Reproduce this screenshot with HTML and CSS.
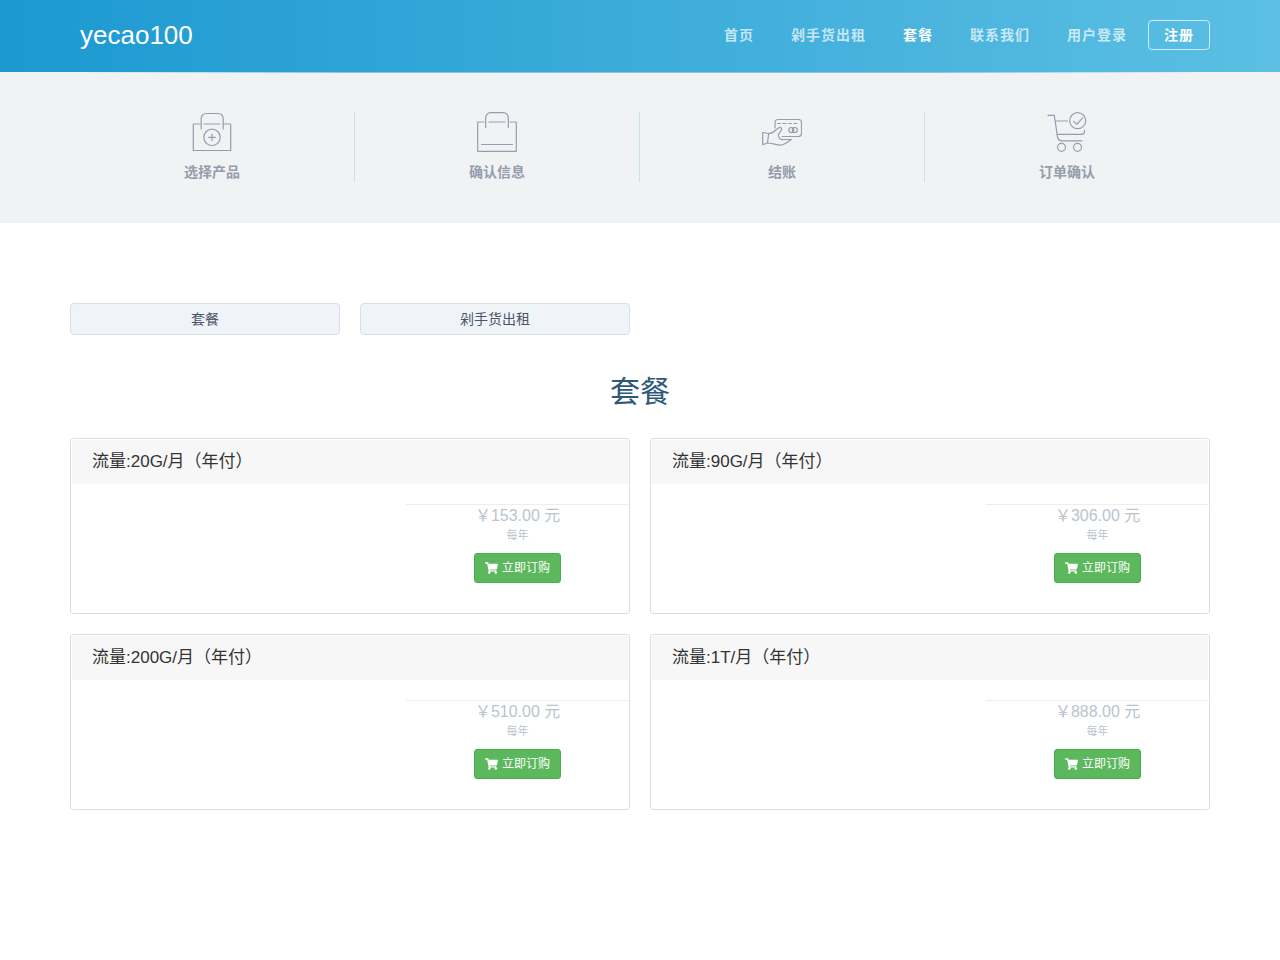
FILE: index.html
```html
<!DOCTYPE html>
<html lang="zh-CN">
<head>
<meta charset="utf-8">
<meta name="viewport" content="width=device-width, initial-scale=1">
<title>套餐 - yecao100</title>
<link rel="stylesheet" href="styles.css">
</head>
<body>
<svg class="sprite" aria-hidden="true">
  <symbol id="cart" viewBox="0 0 576 512"><path fill="currentColor" d="M528 301l47-208c4-15-8-29-23-29H159l-9-45C148 8 138 0 126 0H24C11 0 0 11 0 24v16c0 13 11 24 24 24h70l70 343a56 56 0 1 0 67 9h210a56 56 0 1 0 64-10l5-25c4-15-8-29-23-29H218l-7-32h294c11 0 21-8 23-19z"/></symbol>
</svg>

<header class="header">
  <div class="container header-inner">
    <a class="logo" href="#">yecao100</a>
    <nav class="nav">
      <a href="#">首页</a>
      <a href="#">剁手货出租</a>
      <a class="active" href="#" aria-current="page">套餐</a>
      <a href="#">联系我们</a>
      <a href="#">用户登录</a>
    </nav>
    <a class="register" href="#">注册</a>
  </div>
</header>

<section class="steps">
  <ol class="container step-list">
    <li class="step">
      <svg viewBox="0 0 40 40" aria-hidden="true"><path d="M8 12H1.300v26.500h37.400V12H32M12 12h16M9.200 17V6.500a5 5 0 0 1 5-5h12a5 5 0 0 1 5 5V17"/><circle cx="20" cy="25.300" r="8.200"/><path d="M20 22v6.600M16.700 25.300h6.600"/></svg>
      <span>选择产品</span>
    </li>
    <li class="step">
      <svg viewBox="0 0 40 40" aria-hidden="true"><path d="M7 10H.700v29.300h38.600V10H33M12 10h16M8.700 15.500V5.700a5 5 0 0 1 5-5h12.600a5 5 0 0 1 5 5v9.800M4.500 32.500h31"/></svg>
      <span>确认信息</span>
    </li>
    <li class="step">
      <svg viewBox="0 0 40 40" aria-hidden="true"><path d="M13 16v-5.500a3 3 0 0 1 3-3h20.500a3 3 0 0 1 3 3v11a3 3 0 0 1-3 3H20"/><path d="M15.500 11.500h21" stroke-dasharray="3 2.500"/><circle cx="29.300" cy="18" r="2.500"/><circle cx="32.800" cy="18" r="2.500"/><path d="M.700 20.500l6 1-1.200 9.500-4.800 1.700zM6.700 21.500c3 0 5-1.200 7-3.500l3.200-2.200c2-1 3.600.700 2.300 2.700l-3 4.300c.3 3.200 2.300 5 5.300 4.700h8c-3 1.700-6 4.800-9.500 5.500-5 .500-9-2-14.500-2"/></svg>
      <span>结账</span>
    </li>
    <li class="step">
      <svg viewBox="0 0 40 40" aria-hidden="true"><path d="M1 3.300h6.300l3.200 21.500c.4 2.500 2 4 4.500 4h20M8.300 9h12.200M9.800 22.300h24.500c2 0 3.200-1 3.200-3v-1"/><circle cx="30.700" cy="8.700" r="8"/><path d="M26.700 9.300l3 3 6-6.500"/><circle cx="14.500" cy="35.300" r="4"/><circle cx="30.500" cy="35.300" r="4"/></svg>
      <span>订单确认</span>
    </li>
  </ol>
</section>

<main class="container main">
  <nav class="groups" aria-label="产品分类">
    <a href="#">套餐</a>
    <a href="#">剁手货出租</a>
  </nav>

  <h1 class="title">套餐</h1>

  <div class="plans">
    <article class="plan">
      <h2>流量:20G/月（年付）</h2>
      <div class="plan-body"><div class="offer">
        <p class="price">￥153.00 元</p>
        <p class="cycle">每年</p>
        <button class="order" type="button"><svg aria-hidden="true"><use href="#cart"/></svg>立即订购</button>
      </div></div>
    </article>
    <article class="plan">
      <h2>流量:90G/月（年付）</h2>
      <div class="plan-body"><div class="offer">
        <p class="price">￥306.00 元</p>
        <p class="cycle">每年</p>
        <button class="order" type="button"><svg aria-hidden="true"><use href="#cart"/></svg>立即订购</button>
      </div></div>
    </article>
    <article class="plan">
      <h2>流量:200G/月（年付）</h2>
      <div class="plan-body"><div class="offer">
        <p class="price">￥510.00 元</p>
        <p class="cycle">每年</p>
        <button class="order" type="button"><svg aria-hidden="true"><use href="#cart"/></svg>立即订购</button>
      </div></div>
    </article>
    <article class="plan">
      <h2>流量:1T/月（年付）</h2>
      <div class="plan-body"><div class="offer">
        <p class="price">￥888.00 元</p>
        <p class="cycle">每年</p>
        <button class="order" type="button"><svg aria-hidden="true"><use href="#cart"/></svg>立即订购</button>
      </div></div>
    </article>
  </div>
</main>
</body>
</html>
```
FILE: styles.css
```css
* { box-sizing: border-box; }

body {
  margin: 0;
  background: #fff;
  color: #333;
  font: 14px/20px "Liberation Sans", "Noto Sans CJK SC", sans-serif;
}

a { color: inherit; text-decoration: none; }
h1, h2, p, ol { margin: 0; padding: 0; font-weight: 400; }

.sprite { display: none; }

.container {
  width: 100%;
  max-width: 1180px;
  margin: 0 auto;
  padding: 0 20px;
}

.header {
  background: linear-gradient(90deg, #1c99d1, #5cbfe3);
}

.header-inner {
  display: flex;
  align-items: center;
  padding-top: 20px;
  padding-bottom: 22px;
}

.logo {
  margin-left: 10px;
  color: #fff;
  font-size: 26px;
  line-height: 30px;
}

.nav {
  display: flex;
  gap: 37px;
  margin-left: auto;
  margin-right: 21px;
  color: rgba(255, 255, 255, 0.7);
  font-weight: 700;
  letter-spacing: 1px;
}

.nav .active { color: #fff; }

.register {
  padding: 4px 15px;
  border: 1px solid rgba(255, 255, 255, 0.7);
  border-radius: 4px;
  color: #fff;
  font-weight: 700;
  letter-spacing: 1px;
}

.steps {
  padding: 0 0 41px;
  background: #f1f2f4;
}

.steps::before {
  content: "";
  display: block;
  height: 1px;
  max-width: 1140px;
  margin: 0 auto 39px;
  background: linear-gradient(90deg, #f1f2f4, #7cc8e6 25%, #7cc8e6 75%, #f1f2f4);
}

.step-list {
  display: grid;
  grid-template-columns: repeat(4, 1fr);
  list-style: none;
}

.step {
  display: flex;
  flex-direction: column;
  align-items: center;
  gap: 10px;
  border-right: 1px solid #cde3de;
  color: #959dab;
  font-weight: 700;
}

.step:last-child { border-right-color: transparent; }

.step svg {
  width: 40px;
  height: 40px;
  fill: none;
  stroke: #959eae;
  stroke-width: 1.2;
  stroke-linecap: round;
  stroke-linejoin: round;
}

.main { padding-top: 80px; padding-bottom: 80px; }

.groups {
  display: grid;
  grid-template-columns: repeat(4, 1fr);
  gap: 20px;
}

.groups a {
  padding: 5px;
  border: 1px solid #d8dfe6;
  border-radius: 4px;
  background: #f0f4f9;
  color: #4a5568;
  text-align: center;
}

.title {
  margin: 36px 0 26px;
  color: #2d5a78;
  font-size: 30px;
  line-height: 41px;
  text-align: center;
}

.plans {
  display: grid;
  grid-template-columns: repeat(2, 1fr);
  gap: 20px;
}

.plan {
  padding: 1px;
  border: 1px solid #dcdfe1;
  border-radius: 3px;
}

.plan h2 {
  padding: 10px 20px;
  background: #f7f7f7;
  font-size: 17px;
  line-height: 24px;
}

.plan-body {
  display: flex;
  justify-content: flex-end;
  margin-right: -1px;
  padding: 20px 0 29px;
}

.offer {
  display: flex;
  flex-direction: column;
  align-items: center;
  width: 40%;
  border-top: 1px solid #e9eef1;
  color: #bac4cd;
}

.price { font-size: 16px; line-height: 22px; }
.cycle { font-size: 11px; line-height: 16px; }

.order {
  display: flex;
  align-items: center;
  gap: 4px;
  margin-top: 10px;
  padding: 5px 10px;
  border: 1px solid #4cae4c;
  border-radius: 3px;
  background: #5cb85c;
  color: #fff;
  font: inherit;
  font-size: 12px;
  line-height: 18px;
  cursor: pointer;
}

.order svg { width: 13px; height: 12px; }

@media (max-width: 760px) {
  .header-inner { flex-wrap: wrap; gap: 16px; }
  .nav { flex-wrap: wrap; gap: 16px; margin: 0; }
  .groups { grid-template-columns: repeat(2, 1fr); }
  .plans { grid-template-columns: 1fr; }
}
```
